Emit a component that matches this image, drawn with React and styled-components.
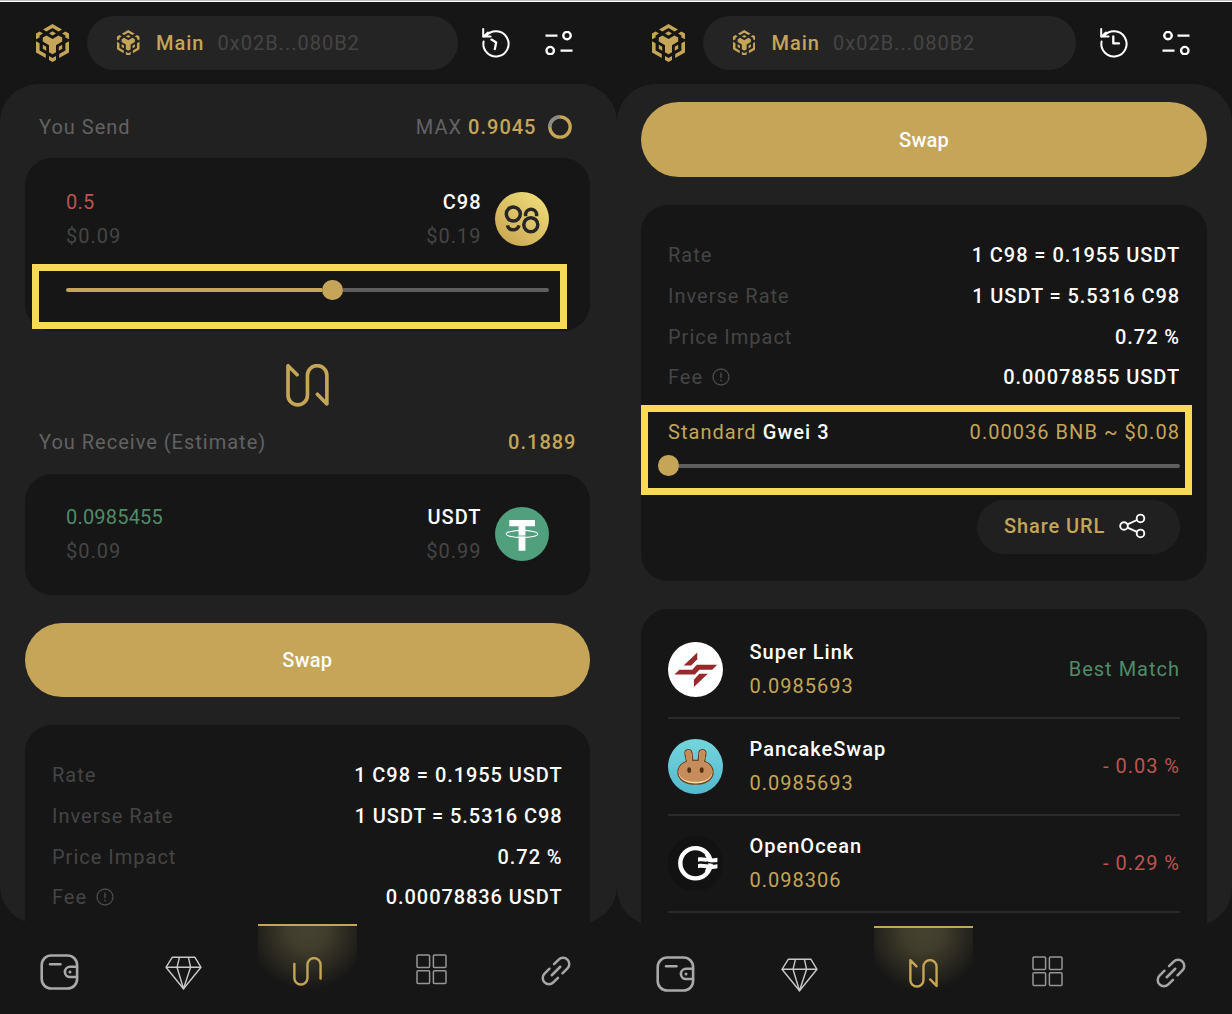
import React from "react";
import styled, { createGlobalStyle, css } from "styled-components";

const c = {
  bg: "#161616",
  body: "#212121",
  pill: "#242424",
  gold: "#c5a557",
  dim: "#626262",
  faint: "#454545",
  red: "#bb5550",
  green: "#508b69",
  mark: "#f9da55",
};

const Global = createGlobalStyle`
  * { box-sizing: border-box; }
  body { margin: 0; background: ${c.bg}; }
`;

const Page = styled.div`
  width: 1232px;
  height: 1014px;
  overflow: hidden;
  background: ${c.bg};
  border-top: 1px solid #bdbdbd;
  font-family: Roboto, "Liberation Sans", sans-serif;
  font-size: 20px;
  letter-spacing: 1px;
  color: #fff;
`;

const Screens = styled.main`
  display: grid;
  grid-template-columns: 616.5px 615.5px;
  height: 1013px;
  border-top: 1px solid #fff;
`;

const Screen = styled.section`
  display: flex;
  flex-direction: column;
  min-width: 0;
  height: 1012px;
`;

const Header = styled.header`
  display: flex;
  align-items: center;
  flex: none;
  height: 82px;
  padding-left: ${(p) => p.$pl}px;
`;

const Account = styled.div`
  display: flex;
  align-items: center;
  flex: none;
  width: ${(p) => p.$w}px;
  height: 54px;
  margin: 0 24px 0 18px;
  padding: 0 0 1px 30px;
  border-radius: 27px;
  background: ${c.pill};
`;

const AccountName = styled.span`
  margin: 0 13px 0 16.5px;
  font-weight: 500;
  color: ${c.gold};
`;

const Address = styled.span`
  color: ${c.faint};
`;

const IconSlot = styled.span`
  display: flex;
  flex: none;
  margin-left: ${(p) => p.$ml || 0}px;
`;

const Content = styled.div`
  flex: none;
  height: ${(p) => p.$h}px;
  padding: ${(p) => p.$pad};
  border-radius: 38px;
  overflow: hidden;
  background: ${c.body};
`;

const Card = styled.div`
  position: relative;
  height: ${(p) => p.$h}px;
  margin-bottom: ${(p) => p.$mb || 0}px;
  padding: ${(p) => p.$pad};
  border-radius: 27px;
  background: ${c.bg};
`;

const Caption = styled.div`
  display: flex;
  align-items: center;
  justify-content: space-between;
  height: ${(p) => p.$h}px;
  padding: 0 ${(p) => p.$pr}px 1px 14px;
  color: ${c.dim};
`;

const MaxGroup = styled.span`
  display: flex;
  align-items: center;
`;

const Gold = styled.span`
  color: ${c.gold};
  font-weight: ${(p) => (p.$bold ? 500 : 400)};
  margin-left: ${(p) => p.$ml || 0}px;
`;

const TokenRow = styled.div`
  display: flex;
  align-items: center;
  height: 68px;
`;

const Lines = styled.div`
  display: flex;
  flex-direction: column;
  line-height: 34px;
  ${(p) =>
    p.$right &&
    css`
      margin-left: auto;
      margin-right: 13.5px;
      text-align: right;
    `}
`;

const Amount = styled.span`
  color: ${(p) => p.$color};
  letter-spacing: 0.2px;
`;

const Symbol = styled.span`
  font-weight: 500;
`;

const Fiat = styled.span`
  color: ${c.faint};
`;

const Track = styled.div`
  display: flex;
  align-items: center;
  height: 20px;
  margin-top: ${(p) => p.$mt}px;
`;

const Fill = styled.div`
  width: ${(p) => p.$w}px;
  height: 4px;
  border-radius: 2px 0 0 2px;
  background: ${c.gold};
`;

const Thumb = styled.div`
  flex: none;
  width: 20.5px;
  height: 20.5px;
  margin-left: ${(p) => p.$ml || 0}px;
  border-radius: 50%;
  background: ${c.gold};
`;

const Rest = styled.div`
  flex: 1;
  height: 4px;
  border-radius: 0 2px 2px 0;
  background: #5f5f5f;
`;

const Highlight = styled.div`
  position: absolute;
  left: ${(p) => p.$x}px;
  top: ${(p) => p.$y}px;
  width: ${(p) => p.$w}px;
  height: ${(p) => p.$h}px;
  border: 7px solid ${c.mark};
`;

const Flip = styled.div`
  display: flex;
  justify-content: center;
  height: 54px;
  padding: 7px 0 0;
`;

const SwapButton = styled.button`
  display: block;
  width: 100%;
  height: ${(p) => p.$h}px;
  margin: 0 0 27.5px;
  padding: 0;
  border: 0;
  border-radius: 38px;
  background: ${c.gold};
  color: #fff;
  font: 500 20px Roboto, "Liberation Sans", sans-serif;
  letter-spacing: 0.2px;
`;

const InfoRow = styled.div`
  display: flex;
  align-items: center;
  justify-content: space-between;
  height: 40.65px;
`;

const InfoLabel = styled.span`
  display: flex;
  align-items: center;
  gap: 8.5px;
  color: ${c.faint};
`;

const InfoValue = styled.span`
  font-weight: 500;
  letter-spacing: 0.93px;
`;

const GasRow = styled.div`
  display: flex;
  align-items: center;
  justify-content: space-between;
  height: 40px;
  margin-top: 14px;
  letter-spacing: 1.04px;
`;

const ShareButton = styled.div`
  display: flex;
  align-items: center;
  justify-content: space-between;
  width: 203px;
  height: 54px;
  margin: 24px 0 0 auto;
  padding: 0 34px 1px 27px;
  border-radius: 27px;
  background: #202020;
  color: ${c.gold};
  font-weight: 500;
  letter-spacing: 0.9px;
`;

const RouteRow = styled.div`
  display: flex;
  align-items: center;
  height: 97px;
  border-bottom: 2px solid #2a2a2a;
`;

const RouteText = styled(Lines)`
  margin-left: 26.5px;
`;

const Diff = styled.span`
  margin-left: auto;
  color: ${(p) => p.$color};
`;

const Nav = styled.nav`
  display: grid;
  grid-template-columns: repeat(5, 1fr);
  flex: 1;
  margin: 0 -1px 0 -2.5px;
`;

const NavItem = styled.div`
  display: flex;
  align-items: flex-start;
  justify-content: center;
  padding-top: ${(p) => p.$pt}px;
`;

const ActiveTab = styled(NavItem)`
  width: 99px;
  height: 66px;
  margin: 0 auto;
  border-top: 2px solid ${c.gold};
  background: radial-gradient(circle 60px at 50% 6%, #464230 0%, #413d2c 32%, #2a281f 68%, ${c.bg} 100%);
`;

const BnbLogo = ({ w }) => (
  <svg width={w} height={(w * 38) / 33} viewBox="0 0 33 38" fill={c.gold}>
    <path d="M16.5 0 26 5.4 22.5 7.5 16.5 4 10.5 7.5 7 5.4Z" />
    <path d="M16.5 7.3 20 9.4 16.5 11.5 13 9.4Z" />
    <path d="M0 15.3V9.5L3.6 7.4 7 9.4 3.6 11.5V13.4Z" />
    <path d="M33 15.3V9.5L29.4 7.4 26 9.4 29.4 11.5V13.4Z" />
    <path d="M10.5 11.4 16.5 15 22.5 11.4 26.2 13.5V17.6L20 21.2V28.2L16.5 30.3 13 28.2V21.2L6.8 17.6V13.5Z" />
    <path d="M0 17.2 3.6 19.3V26.4L9.8 30V34L0 28.4Z" />
    <path d="M33 17.2 29.4 19.3V26.4L23.2 30V34L33 28.4Z" />
    <path d="M6.8 20.8 10.2 22.8V26.8L6.8 24.8Z" />
    <path d="M26.2 20.8 22.8 22.8V26.8L26.2 24.8Z" />
    <path d="M13 32 16.5 34 20 32V36L16.5 38 13 36Z" />
  </svg>
);

const History = ({ tilted }) => (
  <svg width="28" height="30" viewBox="0 1 28 30" fill="none" stroke="#fff" strokeWidth="2" strokeLinecap="round" strokeLinejoin="round">
    <path d="M1.6 13.5A12.6 12.6 0 1 0 4 8.2" transform="translate(0 1)" />
    <path d="M1.2 2V9.6H8.6" />
    <path d="M1.5 9.4 6 5.5" />
    <path d={tilted ? "M9.4 12.6 14.2 15.6 12.8 22" : "M13.3 9.5V16.4H19"} strokeWidth="2.3" />
  </svg>
);

const Toggles = ({ flip }) => (
  <svg width="28" height="24" viewBox="0 0 28 24" fill="none" stroke="#fff" strokeWidth="2.4">
    <g transform={flip ? "translate(28 0) scale(-1 1)" : undefined}>
      <path d="M.5 4.6H12.5M15.5 19.6H27.5" />
      <circle cx="22" cy="4.6" r="3.7" />
      <circle cx="5.2" cy="19.6" r="3.7" />
    </g>
  </svg>
);

const Ring = () => (
  <svg width="24" height="24" viewBox="0 0 24 24" fill="none" strokeWidth="3.3">
    <circle cx="12" cy="12" r="10.2" stroke={c.gold} />
    <path d="M1.8 12A10.2 10.2 0 0 1 12 1.8" stroke="#8a8a8a" />
  </svg>
);

const C98 = () => (
  <svg width="54" height="54" viewBox="0 0 54 54">
    <defs>
      <linearGradient id="c98" x1=".15" y1=".9" x2=".8" y2=".1">
        <stop offset="0" stopColor="#cba956" />
        <stop offset="1" stopColor="#ecd875" />
      </linearGradient>
    </defs>
    <circle cx="27" cy="27" r="27" fill="url(#c98)" />
    <g fill="none" stroke="#262626" strokeWidth="3.5">
      <circle cx="18.3" cy="22" r="7" />
      <circle cx="35.8" cy="32.7" r="7" />
      <path d="M12.4 33.4A6 6 0 0 0 24 33.4" />
      <path d="M30.6 24.3V21.8A5.6 5.6 0 0 1 41.6 21.8V24.3" />
    </g>
  </svg>
);

const Tether = () => (
  <svg width="54" height="54" viewBox="0 0 54 54">
    <circle cx="27" cy="27" r="27" fill="#50a07e" />
    <ellipse cx="27" cy="27" rx="15.8" ry="3.6" fill="none" stroke="#fff" strokeWidth="1.1" />
    <path d="M14.3 13H40V19.2H30.4V43.8H23.6V19.2H14.3Z" fill="#fff" />
    <path d="M23.6 28.8Q27 29.2 30.4 28.8" fill="none" stroke="#50a07e" strokeWidth=".8" />
  </svg>
);

const SwapMark = ({ w, stroke, plain }) => (
  <svg width={w} height={w} viewBox="0 0 42.5 42.5" fill="none" stroke={c.gold} strokeWidth={stroke} strokeLinecap="round" strokeLinejoin="round">
    <path
      d={
        plain
          ? "M2 10V30.8A9.6 9.6 0 0 0 21.2 30.8V11.2A9.6 9.6 0 0 1 40.4 11.2V31.5"
          : "M11 10.7 2 1.7V30.8A9.6 9.6 0 0 0 21.2 30.8V11.2A9.6 9.6 0 0 1 40.4 11.2V39.5L31 29.9"
      }
    />
  </svg>
);

const Alert = () => (
  <svg width="18" height="18" viewBox="0 0 18 18" fill="none" stroke="#4b4b4b" strokeWidth="1.3">
    <circle cx="9" cy="9" r="8" />
    <path d="M9 4.8V10M9 11.8V13.3" strokeWidth="1.5" />
  </svg>
);

const Share = () => (
  <svg width="27" height="26" viewBox="0 0 27 26" fill="none" stroke="#fff" strokeWidth="1.9">
    <circle cx="5" cy="13" r="3.8" />
    <circle cx="21.5" cy="5.4" r="3.8" />
    <circle cx="21.5" cy="20.4" r="3.8" />
    <path d="M8.5 11.4 18 7M8.5 14.6 18 18.8" />
  </svg>
);

const SuperLink = () => (
  <svg width="55" height="55" viewBox="0 0 54.5 54.5">
    <circle cx="27.25" cy="27.25" r="27.25" fill="#fff" />
    <g fill="#97282b">
      <path d="M29 10.3V17L23 23.2H15.5Z" />
      <path d="M6.3 32.2 11.3 27.4H24L28.7 22.6H48.7L43.8 27.5H31L26.7 32.2Z" />
      <path d="M25.7 44.7V37.5L31 31.4H39.4Z" />
    </g>
  </svg>
);

const Pancake = () => (
  <svg width="55" height="55" viewBox="0 0 54.5 54.5">
    <defs>
      <linearGradient id="pcs" x1="0" y1="0" x2="0" y2="1">
        <stop offset="0" stopColor="#74d6db" />
        <stop offset="1" stopColor="#54b8cf" />
      </linearGradient>
    </defs>
    <circle cx="27.25" cy="27.25" r="27.25" fill="url(#pcs)" />
    <path
      d="M18.3 22.2 16.8 14.5C16.2 9.3 23.2 9 23.8 14.3L24.5 21.2H30L30.5 14.3C31 9 38 9.3 37.6 14.5L36.2 22.2C41.5 24.3 44.7 28 44.7 33C44.7 40.5 36.5 44.8 27.2 44.8C18 44.8 9.8 40.5 9.8 33C9.8 28 13 24.3 18.3 22.2Z"
      fill="#fbdc9b"
      stroke="#6f4722"
      strokeWidth="1.3"
    />
    <path
      d="M18.9 22.6 17.4 14.5C17 10.2 22.6 9.8 23.2 14.3L23.9 21.8H30.6L31.1 14.3C31.6 9.8 37.3 10.2 37 14.5L35.5 22.6C41 24.6 44 28 44 32.6C43.4 39.2 36 42.4 27.2 42.4C18.5 42.4 11.1 39.2 10.5 32.6C10.5 28 13.4 24.6 18.9 22.6Z"
      fill="#c78c5b"
    />
    <ellipse cx="21" cy="30.8" rx="1.9" ry="2.9" fill="#55300f" />
    <ellipse cx="33.4" cy="30.8" rx="1.9" ry="2.9" fill="#55300f" />
  </svg>
);

const OpenOcean = () => (
  <svg width="55" height="55" viewBox="0 0 54.5 54.5">
    <circle cx="27.25" cy="27.25" r="27.25" fill="#121212" />
    <circle cx="27.2" cy="27" r="15" fill="none" stroke="#fff" strokeWidth="4.4" />
    <path d="M29.5 20.6H39V32.8H29.5Z" fill="#121212" />
    <path d="M29.7 21.4C36 20.3 40 23.6 49 21.6V25.9C41 27.6 36.5 24 29.7 25.5Z" fill="#fff" />
    <path d="M29.7 27.9C36 26.7 40 29.8 49 28V32C41 34 36.5 30.5 29.7 31.9Z" fill="#fff" />
    <path d="M37 18.5 42 21.5V24.5L38.5 22ZM37 35 42 32.5V30H39Z" fill="#fff" stroke="#fff" strokeWidth=".8" />
    <path d="M38 25.6Q43 27.6 49 26.8" fill="none" stroke="#121212" strokeWidth="1.4" />
  </svg>
);

const Wallet = () => (
  <svg width="39" height="36" viewBox="0 0 39 36" fill="none" stroke="#a9a9a9" strokeWidth="2.6" strokeLinecap="round">
    <rect x="1.7" y="1.5" width="35.4" height="33" rx="9.5" />
    <path d="M10 10.2H20.5" strokeWidth="2.4" />
    <path d="M37 12.8H30A5.1 5.1 0 0 0 30 23H37" />
    <circle cx="30" cy="17.9" r="1.5" fill="#a9a9a9" stroke="none" />
  </svg>
);

const Diamond = () => (
  <svg width="37" height="34" viewBox="0 0 37 34" fill="none" stroke="#c9c9c9" strokeWidth="1.4" strokeLinejoin="round">
    <path d="M7.4 1.2H29.8L36 11.3 18.5 32.8 1 11.3Z" />
    <path d="M1 11.3H36M14.5 1.2 12 11.3 18.5 32.8 25.6 11.3 23.4 1.2" />
  </svg>
);

const Apps = () => (
  <svg width="31" height="31" viewBox="0 0 31 31" fill="none" stroke="#969696" strokeWidth="1.5">
    <rect x="1" y="1" width="12.6" height="12.6" rx="1" />
    <rect x="17.4" y="1" width="12.6" height="12.6" rx="1" />
    <rect x="1" y="16.8" width="12.6" height="12.6" rx="1" />
    <rect x="17.4" y="16.8" width="12.6" height="12.6" rx="1" />
  </svg>
);

const Chain = () => (
  <svg width="30" height="30" viewBox="-15 -15 30 30" fill="none" stroke="#a6a6a6" strokeWidth="2.5" strokeLinecap="round">
    <g transform="rotate(-45)">
      <path d="M3.4 -6.2H10A6.2 6.2 0 0 1 10 6.2H3" />
      <path d="M-3 -6.2H-10A6.2 6.2 0 0 0 -10 6.2H-3.4" />
      <path d="M-6 0H6" />
    </g>
  </svg>
);

const TopBar = ({ right }) => (
  <Header $pl={right ? 35 : 36}>
    <BnbLogo w={33} />
    <Account $w={right ? 373 : 371}>
      <BnbLogo w={22.5} />
      <AccountName>Main</AccountName>
      <Address>0x02B...080B2</Address>
    </Account>
    <IconSlot>
      <History tilted={!right} />
    </IconSlot>
    <IconSlot $ml={34.5}>
      <Toggles flip={right} />
    </IconSlot>
  </Header>
);

const Rates = ({ fee }) => (
  <>
    {[
      ["Rate", "1 C98 = 0.1955 USDT"],
      ["Inverse Rate", "1 USDT = 5.5316 C98"],
      ["Price Impact", "0.72 %"],
      ["Fee", fee],
    ].map(([label, value]) => (
      <InfoRow key={label}>
        <InfoLabel>
          {label}
          {label === "Fee" && <Alert />}
        </InfoLabel>
        <InfoValue>{value}</InfoValue>
      </InfoRow>
    ))}
  </>
);

const BottomNav = ({ plain }) => (
  <Nav>
    <NavItem $pt={29.7}>
      <Wallet />
    </NavItem>
    <NavItem $pt={32}>
      <Diamond />
    </NavItem>
    <ActiveTab $pt={31}>
      <SwapMark w={29} stroke={3.5} plain={plain} />
    </ActiveTab>
    <NavItem $pt={29.7}>
      <Apps />
    </NavItem>
    <NavItem $pt={32}>
      <Chain />
    </NavItem>
  </Nav>
);

const routes = [
  ["Super Link", "0.0985693", "Best Match", c.green, SuperLink],
  ["PancakeSwap", "0.0985693", "- 0.03 %", c.red, Pancake],
  ["OpenOcean", "0.098306", "- 0.29 %", c.red, OpenOcean],
];

export default function App() {
  return (
    <Page>
      <Global />
      <Screens>
        <Screen>
          <TopBar />
          <Content $h={840} $pad="12px 27px 0 25px">
            <Caption $h={62} $pr={18}>
              <span>You Send</span>
              <MaxGroup>
                MAX
                <Gold $bold $ml={6}>0.9045</Gold>
                <IconSlot $ml={11}>
                  <Ring />
                </IconSlot>
              </MaxGroup>
            </Caption>
            <Card $h={172.5} $mb={26} $pad="27px 40.5px 0 41px">
              <TokenRow>
                <Lines>
                  <Amount $color={c.red}>0.5</Amount>
                  <Fiat>$0.09</Fiat>
                </Lines>
                <Lines $right>
                  <Symbol>C98</Symbol>
                  <Fiat>$0.19</Fiat>
                </Lines>
                <C98 />
              </TokenRow>
              <Track $mt={27}>
                <Fill $w={256} />
                <Thumb />
                <Rest />
              </Track>
              <Highlight $x={7} $y={106} $w={535} $h={65} />
            </Card>
            <Flip>
              <SwapMark w={43} stroke={3.6} />
            </Flip>
            <Caption $h={63} $pr={13}>
              <span>You Receive (Estimate)</span>
              <Gold $bold>0.1889</Gold>
            </Caption>
            <Card $h={121.5} $mb={27.5} $pad="26.5px 40.5px 0 41px">
              <TokenRow>
                <Lines>
                  <Amount $color={c.green}>0.0985455</Amount>
                  <Fiat>$0.09</Fiat>
                </Lines>
                <Lines $right>
                  <Symbol>USDT</Symbol>
                  <Fiat>$0.99</Fiat>
                </Lines>
                <Tether />
              </TokenRow>
            </Card>
            <SwapButton $h={74.5}>Swap</SwapButton>
            <Card $h={260} $pad="30.5px 27px 0">
              <Rates fee="0.00078836 USDT" />
            </Card>
          </Content>
          <BottomNav plain />
        </Screen>
        <Screen>
          <TopBar right />
          <Content $h={842} $pad="18px 25px 0 24.5px">
            <SwapButton $h={75}>Swap</SwapButton>
            <Card $h={376} $mb={28} $pad="30.5px 27px 0">
              <Rates fee="0.00078855 USDT" />
              <GasRow>
                <span>
                  <Gold>Standard</Gold> <Symbol>Gwei 3</Symbol>
                </span>
                <Gold>0.00036 BNB ~ $0.08</Gold>
              </GasRow>
              <Track $mt={4}>
                <Thumb $ml={-10} />
                <Rest />
              </Track>
              <ShareButton>
                Share URL
                <Share />
              </ShareButton>
              <Highlight $x={0} $y={200.5} $w={551} $h={90} />
            </Card>
            <Card $h={400} $pad="13px 27px 0">
              {routes.map(([name, amount, diff, color, Logo]) => (
                <RouteRow key={name}>
                  <Logo />
                  <RouteText>
                    <Symbol>{name}</Symbol>
                    <Gold>{amount}</Gold>
                  </RouteText>
                  <Diff $color={color}>{diff}</Diff>
                </RouteRow>
              ))}
            </Card>
          </Content>
          <BottomNav />
        </Screen>
      </Screens>
    </Page>
  );
}
